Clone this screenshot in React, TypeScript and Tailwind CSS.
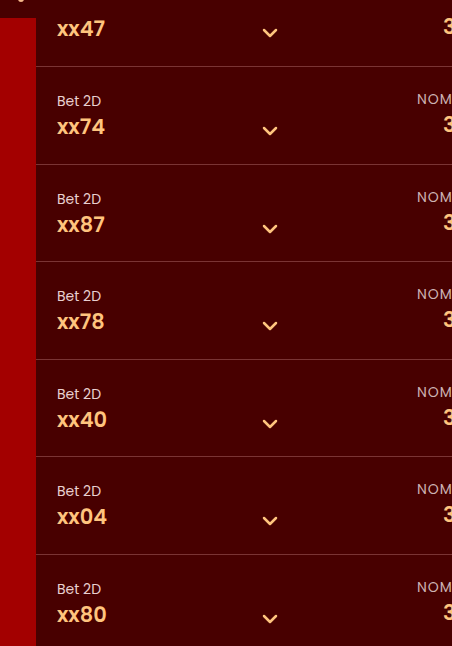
import React from 'react';

const bets = ['xx47', 'xx74', 'xx87', 'xx78', 'xx40', 'xx04', 'xx80'];

const Chevron: React.FC = () => (
  <svg width="16" height="10" viewBox="0 0 16 10" fill="none">
    <path d="M2 2l6 6 6-6" stroke="#ffc47e" strokeWidth="2.5" strokeLinecap="round" strokeLinejoin="round" />
  </svg>
);

const App: React.FC = () => {
  return (
    <div
      className="relative h-[646px] w-[452px] overflow-hidden bg-[#480000]"
      style={{ fontFamily: 'Poppins, Inter, "Noto Sans", sans-serif' }}
    >
      <div className="flex h-full">
        {/* side rail */}
        <div className="flex w-[36px] shrink-0 flex-col">
          <div className="h-[18px]" />
          <div className="flex-1 bg-[#a30000]" />
        </div>

        {/* bet list */}
        <div className="-mt-[30.6px] flex flex-col">
          {bets.map((b) => (
            <div
              key={b}
              className="flex h-[97.6px] w-[600px] shrink-0 items-start border-b border-[#7a3434] pl-[21px]"
            >
              <div className="w-[205px] pt-[25px]">
                <div className="text-[14px] leading-[19px] text-[#e8d0d0]">Bet 2D</div>
                <div className="mt-[2px] text-[21px] font-semibold leading-[28px] text-[#ffc47e]">{b}</div>
              </div>
              <div className="pt-[59px]">
                <Chevron />
              </div>
              <div className="ml-[139px] whitespace-nowrap pt-[23px]">
                <div className="text-[14px] leading-[19px] tracking-[1px] text-[#cdb3b3]">NOMINAL</div>
                <div className="mt-[2px] pl-[26px] text-[21px] font-semibold leading-[28px] text-[#ffc47e]">3.000</div>
              </div>
            </div>
          ))}
        </div>
      </div>

      {/* top bar covering the scrolled list */}
      <div className="absolute left-0 right-0 top-0 h-[15px] bg-[#480000]">
        <div className="absolute -top-[4px] left-[18px] h-[6px] w-[6px] rounded-full bg-[#f6b98a]" />
      </div>
    </div>
  );
};

export default App;
